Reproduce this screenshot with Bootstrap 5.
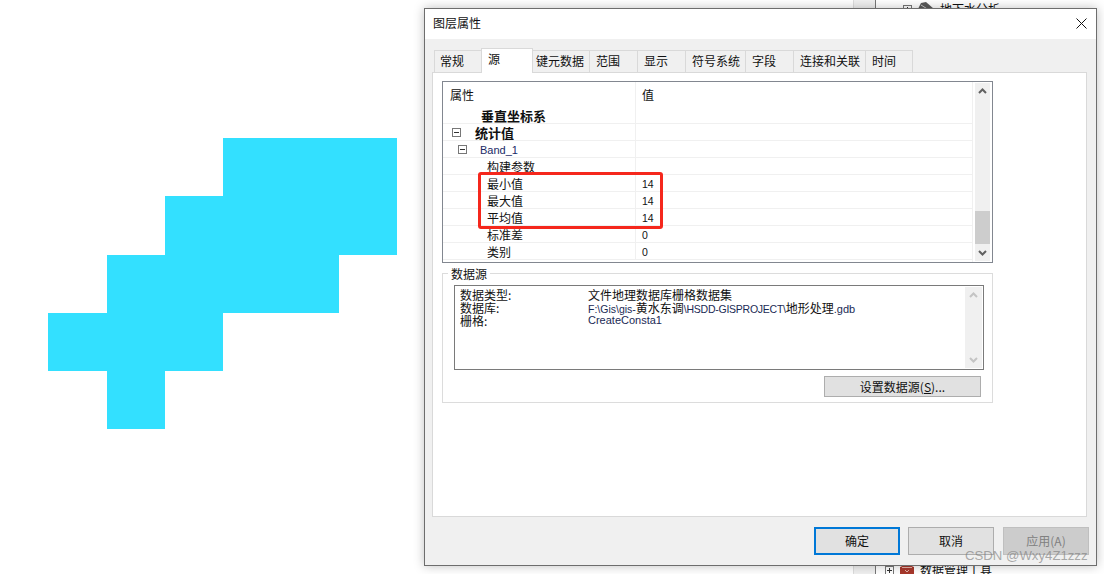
<!DOCTYPE html>
<html lang="zh-CN">
<head>
    <meta charset="UTF-8">
    <title>图层属性</title>
    <link href="https://cdn.jsdelivr.net/npm/bootstrap@5.3.0/dist/css/bootstrap.min.css" rel="stylesheet">
    <style>
        html, body { height: 574px; overflow: hidden; background: #fff; }
        body { font-family: "Noto Sans CJK SC", "Liberation Sans", sans-serif; font-size: 12px; color: #111; position: relative; }

        .raster { position: absolute; left: 48px; top: 138px; display: grid; grid-template-columns: 59px repeat(5, 58px); grid-template-rows: 58px 59px repeat(3, 58px); }
        .raster span { background: #33e0ff; }
        .raster .gap-cell { background: transparent; }

        .back-window { position: absolute; left: 853px; top: 0; width: 251px; height: 574px; }
        .back-scroll { position: absolute; left: 0; top: 0; width: 23px; height: 100%; background: #f0f0f0; border-left: 1px solid #ddd; border-right: 1px solid #777; }
        .back-item { position: absolute; display: flex; align-items: center; gap: 5px; font-size: 12px; line-height: 14px; white-space: nowrap; }
        .back-top { left: 50px; top: 2px; }
        .back-bottom { left: 32px; top: 563px; }
        .tree-box { width: 9px; height: 9px; border: 1px solid #777; display: inline-block; position: relative; background: #fff; flex: none; }
        .tree-box::before { content: ""; position: absolute; left: 1px; right: 1px; top: 3px; height: 1px; background: #333; }
        .tree-box.plus::after { content: ""; position: absolute; top: 1px; bottom: 1px; left: 3px; width: 1px; background: #333; }

        .dlg { position: absolute; left: 424px; top: 8px; width: 673px; height: 558px; background: #f0f0f0; border: 1px solid #6d6d6d; box-shadow: 0 0 10px rgba(0,0,0,.25); display: flex; flex-direction: column; }
        .dlg-title { height: 30px; background: #fff; flex: none; padding: 0 0 2px 8px; }
        .dlg-close { width: 30px; height: 28px; }

        .tab-strip { padding: 11px 0 0 9px; height: 33px; flex: none; align-items: flex-end; }
        .tab-item { height: 22px; border: 1px solid #d9d9d9; border-bottom: 0; margin-left: -1px; padding: 0 0 2px 6px; background: #f0f0f0; display: flex; align-items: center; white-space: nowrap; flex: none; }
        .tab-item.on { background: #fff; position: relative; z-index: 2; margin-bottom: -1px; height: 25px; padding-bottom: 4px; }

        .tab-panel { margin: 0 9px 0 7px; height: 445px; background: #fff; border: 1px solid #d9d9d9; padding: 8px 9px; flex: none; }

        .prop-box { height: 182px; width: 551px; border: 1px solid #828790; display: flex; position: relative; overflow: hidden; }
        .prop-table { flex: 1 1 auto; min-width: 0; border-right: 1px solid #f0f0f0; }
        .prop-row { display: flex; height: 17px; border-bottom: 1px solid #f0f0f0; line-height: 16px; }
        .prop-row:not(.prop-head) > div { padding-top: 1px; }
        .prop-head { height: 25px; border-bottom: 0; align-items: center; line-height: 22px; }
        .prop-name { width: 193px; flex: none; border-right: 1px solid #f0f0f0; white-space: nowrap; padding-left: 7px; display: flex; align-items: center; }
        .prop-head .prop-name { height: 25px; }
        .prop-val { flex: 1 1 auto; padding-left: 6px; font-size: 10.5px; font-family: "Liberation Sans", sans-serif; display: flex; align-items: center; }
        .prop-head .prop-val { font-family: "Noto Sans CJK SC", sans-serif; font-size: 12px; }
        .bold-t { font-weight: 700; font-size: 13px; }
        .ind-38 { padding-left: 38px; }
        .ind-44 { padding-left: 44px; }
        .ind-9 { padding-left: 9px; }
        .ind-15 { padding-left: 15px; }
        .band-t { font-family: "Liberation Sans", sans-serif; font-size: 11px; color: #1a2a66; padding-left: 13px; }
        .group-t { padding-left: 14px; }

        .vscroll { width: 15px; flex: none; margin: 1px 2px 1px 2px; background: #f0f0f0; display: flex; flex-direction: column; justify-content: space-between; position: relative; }
        .vscroll svg { display: block; margin: 5px auto 5px; }
        .vthumb { position: absolute; left: 0; right: 0; bottom: 17px; height: 33px; background: #cdcdcd; }

        .hilite { position: absolute; left: 35px; top: 90px; width: 185px; height: 57px; border: 3px solid #f5271c; border-radius: 3px; pointer-events: none; }

        .source-group { position: relative; margin-top: 10px; height: 130px; width: 551px; border: 1px solid #dcdcdc; padding: 11px 8px 0 11px; }
        .source-label { position: absolute; left: 5px; top: -8px; background: #fff; padding: 0 3px; line-height: 15px; }
        .source-box { height: 85px; border: 1px solid #7a7a7a; display: flex; }
        .source-text { flex: 1 1 auto; padding: 2px 5px 0; line-height: 13px; }
        .source-text > div { display: flex; height: 13px; }
        .source-text .lbl { width: 128px; flex: none; }
        .source-text .latin-t { font-family: "Liberation Sans", sans-serif; font-size: 10.5px; color: #1a2a55; }
        .source-text .latin-wide { font-family: "Liberation Sans", sans-serif; font-size: 11px; color: #1a2a55; }
        .source-text .latin-tight { letter-spacing: -.25px; }
        .scroll-off { width: 17px; flex: none; margin: 1px; background: #f0f0f0; display: flex; flex-direction: column; justify-content: space-between; }
        .scroll-off svg { display: block; margin: 5px auto; }

        .btn-set { margin: 6px 3px 0 auto; display: block; width: 157px; height: 21px; background: #e1e1e1; border: 1px solid #adadad; border-radius: 0; padding: 0; font-size: 12px; line-height: 18px; color: #111; }

        .dlg-foot { flex: 1 1 auto; padding: 10px 7px 0 0; gap: 8px; justify-content: flex-end; }
        .btn-dlg { width: 86px; height: 28px; background: #e1e1e1; border: 1px solid #adadad; border-radius: 0; padding: 0; font-size: 12px; color: #111; }
        .btn-dlg.main { border: 2px solid #0078d7; }
        .btn-dlg:disabled { background: #cccccc; border-color: #bfbfbf; color: #808080; opacity: 1; margin-left: 1px; }

        .mark-wm { position: absolute; left: 965px; top: 548px; font-family: "Liberation Sans", sans-serif; font-size: 13.2px; line-height: 16px; color: rgba(120,120,120,.62); white-space: nowrap; }
    </style>
</head>
<body>
    <div class="raster">
        <span class="gap-cell"></span><span class="gap-cell"></span><span class="gap-cell"></span><span></span><span></span><span></span>
        <span class="gap-cell"></span><span class="gap-cell"></span><span></span><span></span><span></span><span></span>
        <span class="gap-cell"></span><span></span><span></span><span></span><span></span><span class="gap-cell"></span>
        <span></span><span></span><span></span><span class="gap-cell"></span><span class="gap-cell"></span><span class="gap-cell"></span>
        <span class="gap-cell"></span><span></span><span class="gap-cell"></span><span class="gap-cell"></span><span class="gap-cell"></span><span class="gap-cell"></span>
    </div>

    <div class="back-window">
        <div class="back-scroll"></div>
        <div class="back-item back-top"><i class="tree-box plus"></i><svg width="18" height="14" viewBox="0 0 18 14"><path d="M1 7 L4 1 L9 0 L17 7 V14 H1Z" fill="#5a5a5a"/><path d="M4 3l8 5" stroke="#ccc"/></svg>地下水分析</div>
        <div class="back-item back-bottom"><i class="tree-box plus"></i><svg width="16" height="13" viewBox="0 0 16 13"><path d="M1 3 L8 0 L15 3 V10 L8 13 L1 10Z" fill="#a8382c"/><path d="M3 3.500h10M6 6l2 2 2-2" stroke="#e6b3a8" fill="none"/></svg>数据管理工具</div>
    </div>

    <div class="dlg">
        <div class="dlg-title d-flex align-items-center justify-content-between">
            <span>图层属性</span>
            <span class="dlg-close d-flex align-items-center justify-content-center">
                <svg width="11" height="11" viewBox="0 0 11 11"><path d="M.5.5l10 10M10.500.5l-10 10" stroke="#111" fill="none"/></svg>
            </span>
        </div>
        <div class="tab-strip d-flex">
            <div class="tab-item" style="width:48px;margin-left:0;padding-left:5px">常规</div>
            <div class="tab-item on" style="width:52px">源</div>
            <div class="tab-item" style="width:58px;padding-left:3px">键元数据</div>
            <div class="tab-item" style="width:49px">范围</div>
            <div class="tab-item" style="width:49px">显示</div>
            <div class="tab-item" style="width:61px">符号系统</div>
            <div class="tab-item" style="width:49px">字段</div>
            <div class="tab-item" style="width:73px">连接和关联</div>
            <div class="tab-item" style="width:48px">时间</div>
        </div>
        <div class="tab-panel">
            <div class="prop-box">
                <div class="prop-table">
                    <div class="prop-row prop-head"><div class="prop-name">属性</div><div class="prop-val">值</div></div>
                    <div class="prop-row"><div class="prop-name ind-38 bold-t">垂直坐标系</div><div class="prop-val"></div></div>
                    <div class="prop-row"><div class="prop-name ind-9 bold-t"><i class="tree-box"></i><span class="group-t">统计值</span></div><div class="prop-val"></div></div>
                    <div class="prop-row"><div class="prop-name ind-15"><i class="tree-box"></i><span class="band-t">Band_1</span></div><div class="prop-val"></div></div>
                    <div class="prop-row"><div class="prop-name ind-44">构建参数</div><div class="prop-val"></div></div>
                    <div class="prop-row"><div class="prop-name ind-44">最小值</div><div class="prop-val">14</div></div>
                    <div class="prop-row"><div class="prop-name ind-44">最大值</div><div class="prop-val">14</div></div>
                    <div class="prop-row"><div class="prop-name ind-44">平均值</div><div class="prop-val">14</div></div>
                    <div class="prop-row"><div class="prop-name ind-44">标准差</div><div class="prop-val">0</div></div>
                    <div class="prop-row"><div class="prop-name ind-44">类别</div><div class="prop-val">0</div></div>
                </div>
                <div class="vscroll">
                    <svg width="9" height="6" viewBox="0 0 9 6"><path d="M1 5l3.500-3.500L8 5" stroke="#606060" stroke-width="2" fill="none"/></svg>
                    <svg width="9" height="6" viewBox="0 0 9 6"><path d="M1 1l3.500 3.500L8 1" stroke="#606060" stroke-width="2" fill="none"/></svg>
                    <div class="vthumb"></div>
                </div>
                <div class="hilite"></div>
            </div>

            <div class="source-group">
                <div class="source-label">数据源</div>
                <div class="source-box">
                    <div class="source-text">
                        <div><span class="lbl">数据类型:</span><span>文件地理数据库栅格数据集</span></div>
                        <div><span class="lbl">数据库:</span><span><span class="latin-t">F:\Gis\gis-</span>黄水东调<span class="latin-t latin-tight">\HSDD-GISPROJECT\</span>地形处理<span class="latin-wide">.gdb</span></span></div>
                        <div><span class="lbl">栅格:</span><span class="latin-wide">CreateConsta1</span></div>
                    </div>
                    <div class="scroll-off">
                        <svg width="9" height="6" viewBox="0 0 9 6"><path d="M1 5l3.500-3.500L8 5" stroke="#c4c4c4" stroke-width="2" fill="none"/></svg>
                        <svg width="9" height="6" viewBox="0 0 9 6"><path d="M1 1l3.500 3.500L8 1" stroke="#c4c4c4" stroke-width="2" fill="none"/></svg>
                    </div>
                </div>
                <button type="button" class="btn btn-set">设置数据源(<u>S</u>)...</button>
            </div>
        </div>
        <div class="dlg-foot d-flex">
            <button type="button" class="btn btn-dlg main">确定</button>
            <button type="button" class="btn btn-dlg">取消</button>
            <button type="button" class="btn btn-dlg" disabled>应用(A)</button>
        </div>
    </div>

    <div class="mark-wm">CSDN @Wxy4Z1zzz</div>
</body>
</html>
